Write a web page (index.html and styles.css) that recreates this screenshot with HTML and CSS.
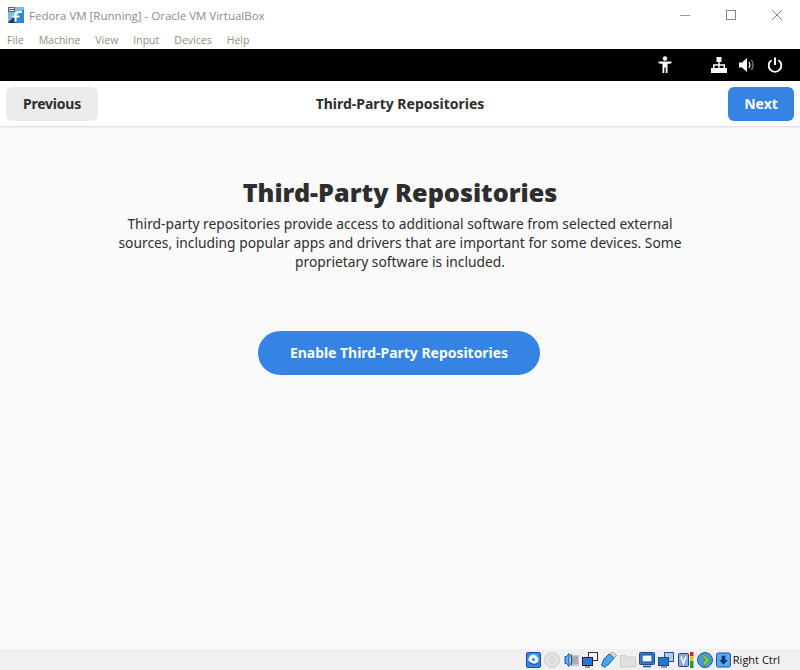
FILE: index.html
```html
<!DOCTYPE html>
<html lang="en">
<head>
<meta charset="utf-8">
<title>Fedora VM [Running] - Oracle VM VirtualBox</title>
<link rel="stylesheet" href="styles.css">
</head>
<body>
<div class="window">
  <div class="titlebar">
    <svg class="app-icon" width="16" height="16" viewBox="0 0 16 16">
      <rect x="0" y="2" width="16" height="14" fill="#2f86dc"/>
      <path d="M0 16L16 2V0H7v4H0z" fill="#7db8ea"/>
      <rect x="0" y="0" width="7" height="5" fill="#59646e"/>
      <path d="M1 1.500h5M1 3.500h5" stroke="#e4e8ec" stroke-width="1"/>
      <path d="M0 16l6-7 3 7z" fill="#123f78"/>
      <path d="M7.500 15V7.500Q7.500 5 10.500 5H14M4.500 9.500h7" stroke="#fff" stroke-width="2" fill="none"/>
    </svg>
    <span class="title-text">Fedora VM [Running] - Oracle VM VirtualBox</span>
    <div class="win-controls">
      <svg width="12" height="12" viewBox="0 0 12 12"><path d="M1 6.500h10" stroke="#999" fill="none"/></svg>
      <svg width="12" height="12" viewBox="0 0 12 12"><rect x="1.500" y="1.500" width="9" height="9" stroke="#888" fill="none"/></svg>
      <svg width="12" height="12" viewBox="0 0 12 12"><path d="M1 1l10 10M11 1L1 11" stroke="#888" fill="none"/></svg>
    </div>
  </div>
  <nav class="menubar">
    <span>File</span><span>Machine</span><span>View</span><span>Input</span><span>Devices</span><span>Help</span>
  </nav>
  <div class="guest">
    <div class="gnome-bar">
      <svg class="a11y" width="16" height="18" viewBox="0 0 16 18"><circle cx="8" cy="2.500" r="2.200" fill="#fff"/><path d="M1.500 5.500h13v1.800l-4 .7V17H8.700v-5.500H7.300V17H5.500V8l-4-.7z" fill="#fff"/></svg>
      <div class="tray">
        <svg width="16" height="16" viewBox="0 0 16 16"><path d="M5.500 0h5v5H8.700v2.300H14V11h2v5h-5.500v-5h2V8.800H8.700V11h1.800v5h-5v-5h1.800V8.800H3.500V11h2v5H0v-5h2V7.300h5.300V5H5.500z" fill="#fff"/></svg>
        <svg width="16" height="16" viewBox="0 0 16 16"><path d="M0 5.500h3L8 1v14l-5-4.500H0z" fill="#fff"/><path d="M10 5q1.800 3 0 6" stroke="#ddd" stroke-width="1.400" fill="none"/><path d="M12.500 3q3 5 0 10" stroke="#777" stroke-width="1.400" fill="none"/></svg>
        <svg width="16" height="16" viewBox="0 0 16 16"><path d="M8 .5v7.500" stroke="#fff" stroke-width="2" fill="none"/><path d="M4.600 3.200a6.300 6.300 0 1 0 6.800 0" stroke="#fff" stroke-width="1.800" fill="none"/></svg>
      </div>
    </div>
    <header class="headerbar">
      <button class="btn btn-plain">Previous</button>
      <h2 class="header-title">Third-Party Repositories</h2>
      <button class="btn btn-blue">Next</button>
    </header>
    <main class="content">
      <h1 class="page-title">Third-Party Repositories</h1>
      <p class="page-text">Third-party repositories provide access to additional software from selected external sources, including popular apps and drivers that are important for some devices. Some proprietary software is included.</p>
      <button class="pill">Enable Third-Party Repositories</button>
    </main>
  </div>
  <footer class="statusbar">
    <div class="status-icons">
      <svg width="16" height="16" viewBox="0 0 16 16"><rect x="1.500" y=".5" width="14" height="15" rx="1.500" fill="#2f8be6" stroke="#1a4f9c"/><circle cx="8.500" cy="7.500" r="5" fill="#eef6fd"/><circle cx="8.500" cy="7.500" r="1.500" fill="#2f8be6"/><path d="M4 10q4 4 9 1" stroke="#1a4f9c" stroke-width="1.200" fill="none"/><path d="M9 2.500q3 .5 3.500 3.500" stroke="#8cc0ee" fill="none"/></svg>
      <svg width="16" height="16" viewBox="0 0 16 16"><circle cx="8" cy="8" r="7.500" fill="#e2e2e2" stroke="#cdcdcd"/><circle cx="8" cy="8" r="2" fill="#f6f6f6" stroke="#c4c4c4"/></svg>
      <svg width="16" height="16" viewBox="0 0 16 16"><rect x="8" y="3" width="8" height="11" fill="#c8c8c8"/><path d="M10 5h5M10 7h5M10 9h5M10 11h5" stroke="#8e8e8e"/><path d="M2 4.500h1.500L6 1.500v13l-2.500-3H2z" fill="#5cb2f0" stroke="#14549c"/><path d="M8 2.500q1.500 5.500 0 11" stroke="#14549c" stroke-width="1.500" fill="none"/></svg>
      <svg width="16" height="16" viewBox="0 0 16 16"><rect x="6.500" y=".5" width="9" height="8" fill="#f0f4f8" stroke="#333"/><rect x=".5" y="5.500" width="10" height="8" fill="#2a77cc" stroke="#222"/><path d="M3 15h5" stroke="#444"/></svg>
      <svg width="16" height="16" viewBox="0 0 16 16"><path d="M.5 13L3 7l5-5 5 4-5 6-5 3.500z" fill="#46a8ee" stroke="#1a5a9c" stroke-linejoin="round"/><path d="M9 1.500L11.500 0l4 3.500-2 2.500z" fill="#e4e4e4" stroke="#777" stroke-width=".7"/></svg>
      <svg width="16" height="16" viewBox="0 0 16 16"><path d="M.5 3.500h5l1 1.500h9v10H.5z" fill="#e0e0e0" stroke="#cacaca"/></svg>
      <svg width="16" height="16" viewBox="0 0 16 16"><rect x=".5" y=".5" width="15" height="12" rx="1" fill="#2f7fd8" stroke="#174a8c"/><rect x="3" y="3" width="10" height="7" fill="#eef5fc" stroke="#174a8c"/><path d="M4 14.500h8" stroke="#174a8c" stroke-width="1.500"/></svg>
      <svg width="16" height="16" viewBox="0 0 16 16"><rect x="6.500" y=".5" width="9" height="9" fill="#aecdee" stroke="#27538c"/><rect x=".5" y="5.500" width="10" height="8" fill="#2a77cc" stroke="#1d4a84"/><path d="M3 15h6" stroke="#1d4a84"/></svg>
      <svg width="17" height="16" viewBox="0 0 17 16"><rect x="1.500" y="1.500" width="10" height="13" rx="1" fill="#8ea6e4" stroke="#2a3f8a"/><path d="M4 4.500l2.500 7 2.500-7" stroke="#fff" stroke-width="1.600" fill="none"/><rect x="13" y="0" width="3.500" height="4" fill="#d62020"/><rect x="13" y="4" width="3.500" height="5" fill="#e8c020"/><rect x="13" y="9" width="3.500" height="7" fill="#20a030"/></svg>
      <svg width="16" height="16" viewBox="0 0 16 16"><circle cx="8" cy="8" r="7.500" fill="#4a9ce0" stroke="#1f5a9c"/><path d="M6 2l7 6-6 6-1-4 3-2-4-4z" fill="#8cd040" stroke="#3d7a18" stroke-width=".6"/></svg>
      <svg width="15" height="16" viewBox="0 0 16 16"><rect x=".5" y=".5" width="15" height="15" rx="2" fill="#5aa8ee" stroke="#1a4f9c"/><path d="M6 3.500h4V8h2.500L8 13 3.500 8H6z" fill="#12366e"/></svg>
      <span class="host-key">Right Ctrl</span>
    </div>
  </footer>
</div>
</body>
</html>
```

FILE: styles.css
```css
* { box-sizing: border-box; }
html, body { margin: 0; padding: 0; }
body { width: 800px; height: 670px; overflow: hidden; font-family: "Noto Sans", sans-serif; }
.window { width: 800px; height: 670px; display: flex; flex-direction: column; background: #fff; }
.titlebar { height: 30px; display: flex; align-items: center; padding-left: 8px; }
.app-icon { flex: none; }
.title-text { margin-left: 5px; font: 11.500px "Open Sans", "Liberation Sans", sans-serif; color: #8c8c8c; }
.win-controls { margin-left: auto; display: flex; gap: 34px; padding-right: 17px; }
.menubar { height: 19px; display: flex; align-items: center; gap: 15px; padding: 0 0 0 7px; font: 10.500px "Open Sans", "Liberation Sans", sans-serif; color: #8f8f80; }
.guest { flex: 1; display: flex; flex-direction: column; min-height: 0; }
.gnome-bar { height: 32px; background: #000; display: flex; align-items: center; }
.a11y { margin-left: 657px; }
.tray { margin-left: 38px; display: flex; gap: 12px; }
.headerbar { height: 46px; display: grid; grid-template-columns: 1fr auto 1fr; align-items: center; padding: 0 6px; background: #fff; border-bottom: 1px solid #e2e2e2; box-shadow: 0 1px 2px rgba(0, 0, 0, 0.06); position: relative; }
.btn { height: 34px; border: 0; border-radius: 6px; font: 700 14px "Noto Sans", sans-serif; padding: 0; }
.btn-plain { width: 92px; background: #ebebeb; color: #2e2e2e; letter-spacing: -0.2px; justify-self: start; }
.btn-blue { width: 66px; background: #3584e4; color: #fff; justify-self: end; }
.header-title { margin: 0; font: 700 14px "Noto Sans", sans-serif; color: #2e2e2e; }
.content { flex: 1; background: #fafafa; display: flex; flex-direction: column; align-items: center; padding-top: 47px; }
.page-title { margin: 0; font: 900 25.200px/36px "Noto Sans", sans-serif; color: #2e2e2e; }
.page-text { margin: 4px 0 0; width: 572px; text-align: center; font: 400 13.800px/19px "Noto Sans", sans-serif; color: #2e2e2e; }
.pill { margin: 60px 2px 0 0; width: 282px; height: 44px; padding: 0 0 2px; border: 0; border-radius: 22px; background: #3584e4; color: #fff; font: 700 14px "Noto Sans", sans-serif; letter-spacing: -0.03px; }
.statusbar { height: 21px; background: #f0f0f0; display: flex; align-items: center; justify-content: flex-end; }
.status-icons { display: flex; align-items: center; gap: 3px; padding-right: 20px; }
.host-key { margin-left: -1px; font: 11px "Open Sans", "Liberation Sans", sans-serif; color: #111; }
```
